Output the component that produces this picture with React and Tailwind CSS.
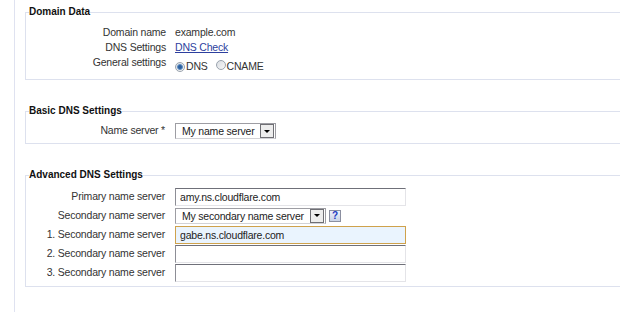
import React from "react";

function Radio({ checked }) {
  return (
    <span className="inline-flex items-center justify-center w-[10px] h-[10px] rounded-full border border-[#9aa3ae] bg-gradient-to-br from-[#d9dde2] to-[#f7f7f7] shrink-0">
      {checked && <span className="w-[6px] h-[6px] rounded-full bg-[#2b5f9e] border border-[#5d8ec4]" />}
    </span>
  );
}

function FakeSelect({ width, text }) {
  return (
    <div className={`flex items-center h-[16px] border border-[#9d9da3] border-b-[#d2d2d6] bg-white ${width}`}>
      <span className="flex-1 pl-[6px] text-[#222] leading-[14px] whitespace-nowrap">{text}</span>
      <span className="flex items-center justify-center w-[14px] h-[14px] border border-[#6f6f74] bg-[#ededed] mr-px">
        <span className="w-0 h-0 border-l-[3px] border-r-[3px] border-t-[3px] border-l-transparent border-r-transparent border-t-black" />
      </span>
    </div>
  );
}

function TextBox({ value, focused }) {
  const base = "w-[231px] h-[18px] pl-[4px] text-[10.5px] tracking-[-0.2px] text-[#222] outline-none border";
  const look = focused
    ? "border-[#cfa24c] bg-[#eaf4fe]"
    : "border-t-[#6f7079] border-l-[#8d8e96] border-r-[#e4e4e8] border-b-[#e4e4e8] bg-white";
  return <input type="text" readOnly value={value} className={`${base} ${look}`} />;
}

function Row({ label, children }) {
  return (
    <div className="flex items-center h-[19px]">
      <div className="w-[140px] shrink-0 text-right pr-px whitespace-nowrap">{label}</div>
      <div className="pl-[9px] flex items-center">{children}</div>
    </div>
  );
}

export default function App() {
  return (
    <div className="w-[620px] h-[312px] overflow-hidden bg-white flex font-['Liberation_Sans',Arial,sans-serif] text-[10.5px] tracking-[-0.2px] text-[#333]">
      <div className="w-[14px] shrink-0" />
      <div className="w-px shrink-0 bg-[#dfe2f0]" />
      <div className="pl-[10px]">
        {/* Domain data */}
        <fieldset className="mt-[6px] w-[600px] border border-[#dde1ee] pt-[7px] pb-[5px]">
          <legend className="ml-[3px] font-bold text-[10px] tracking-normal text-[#111] leading-[12px]">Domain Data</legend>
          <div className="grid grid-cols-[140px_1fr] gap-x-[9px] leading-[15px]">
            <div className="text-right">Domain name</div>
            <div>example.com</div>
            <div className="text-right">DNS Settings</div>
            <div>
              <a href="#" className="text-[#2d3f9e] underline">DNS Check</a>
            </div>
            <div className="text-right">General settings</div>
            <div className="flex items-center pt-[4px] h-[19px]">
              <Radio checked />
              <span className="ml-px">DNS</span>
              <span className="ml-[8px]"><Radio /></span>
              <span className="ml-px">CNAME</span>
            </div>
          </div>
        </fieldset>

        {/* Basic DNS */}
        <fieldset className="mt-[25px] w-[600px] border border-[#dde1ee] pt-[6px] pb-[4px]">
          <legend className="ml-[3px] font-bold text-[10px] tracking-normal text-[#111] leading-[12px]">Basic DNS Settings</legend>
          <div className="flex items-center h-[16px]">
            <div className="w-[140px] shrink-0 text-right pr-px">Name server *</div>
            <div className="pl-[9px]">
              <FakeSelect width="w-[101px]" text="My name server" />
            </div>
          </div>
        </fieldset>

        {/* Advanced DNS */}
        <fieldset className="mt-[25px] w-[600px] border border-[#dde1ee] pt-[6px] pb-[4px]">
          <legend className="ml-[3px] font-bold text-[10px] tracking-normal text-[#111] leading-[12px]">Advanced DNS Settings</legend>
          <div className="flex flex-col">
            <Row label="Primary name server">
              <TextBox value="amy.ns.cloudflare.com" />
            </Row>
            <Row label="Secondary name server">
              <FakeSelect width="w-[151px]" text="My secondary name server" />
              <span className="ml-[3px] flex items-center justify-center w-[12px] h-[12px] border border-[#8b8fa0] bg-gradient-to-b from-[#eef2fa] to-[#c9d3e6] text-[#1c3bc2] font-bold text-[10px] tracking-normal leading-none">?</span>
            </Row>
            <Row label="1. Secondary name server">
              <TextBox value="gabe.ns.cloudflare.com" focused />
            </Row>
            <Row label="2. Secondary name server">
              <TextBox value="" />
            </Row>
            <Row label="3. Secondary name server">
              <TextBox value="" />
            </Row>
          </div>
        </fieldset>
      </div>
    </div>
  );
}
